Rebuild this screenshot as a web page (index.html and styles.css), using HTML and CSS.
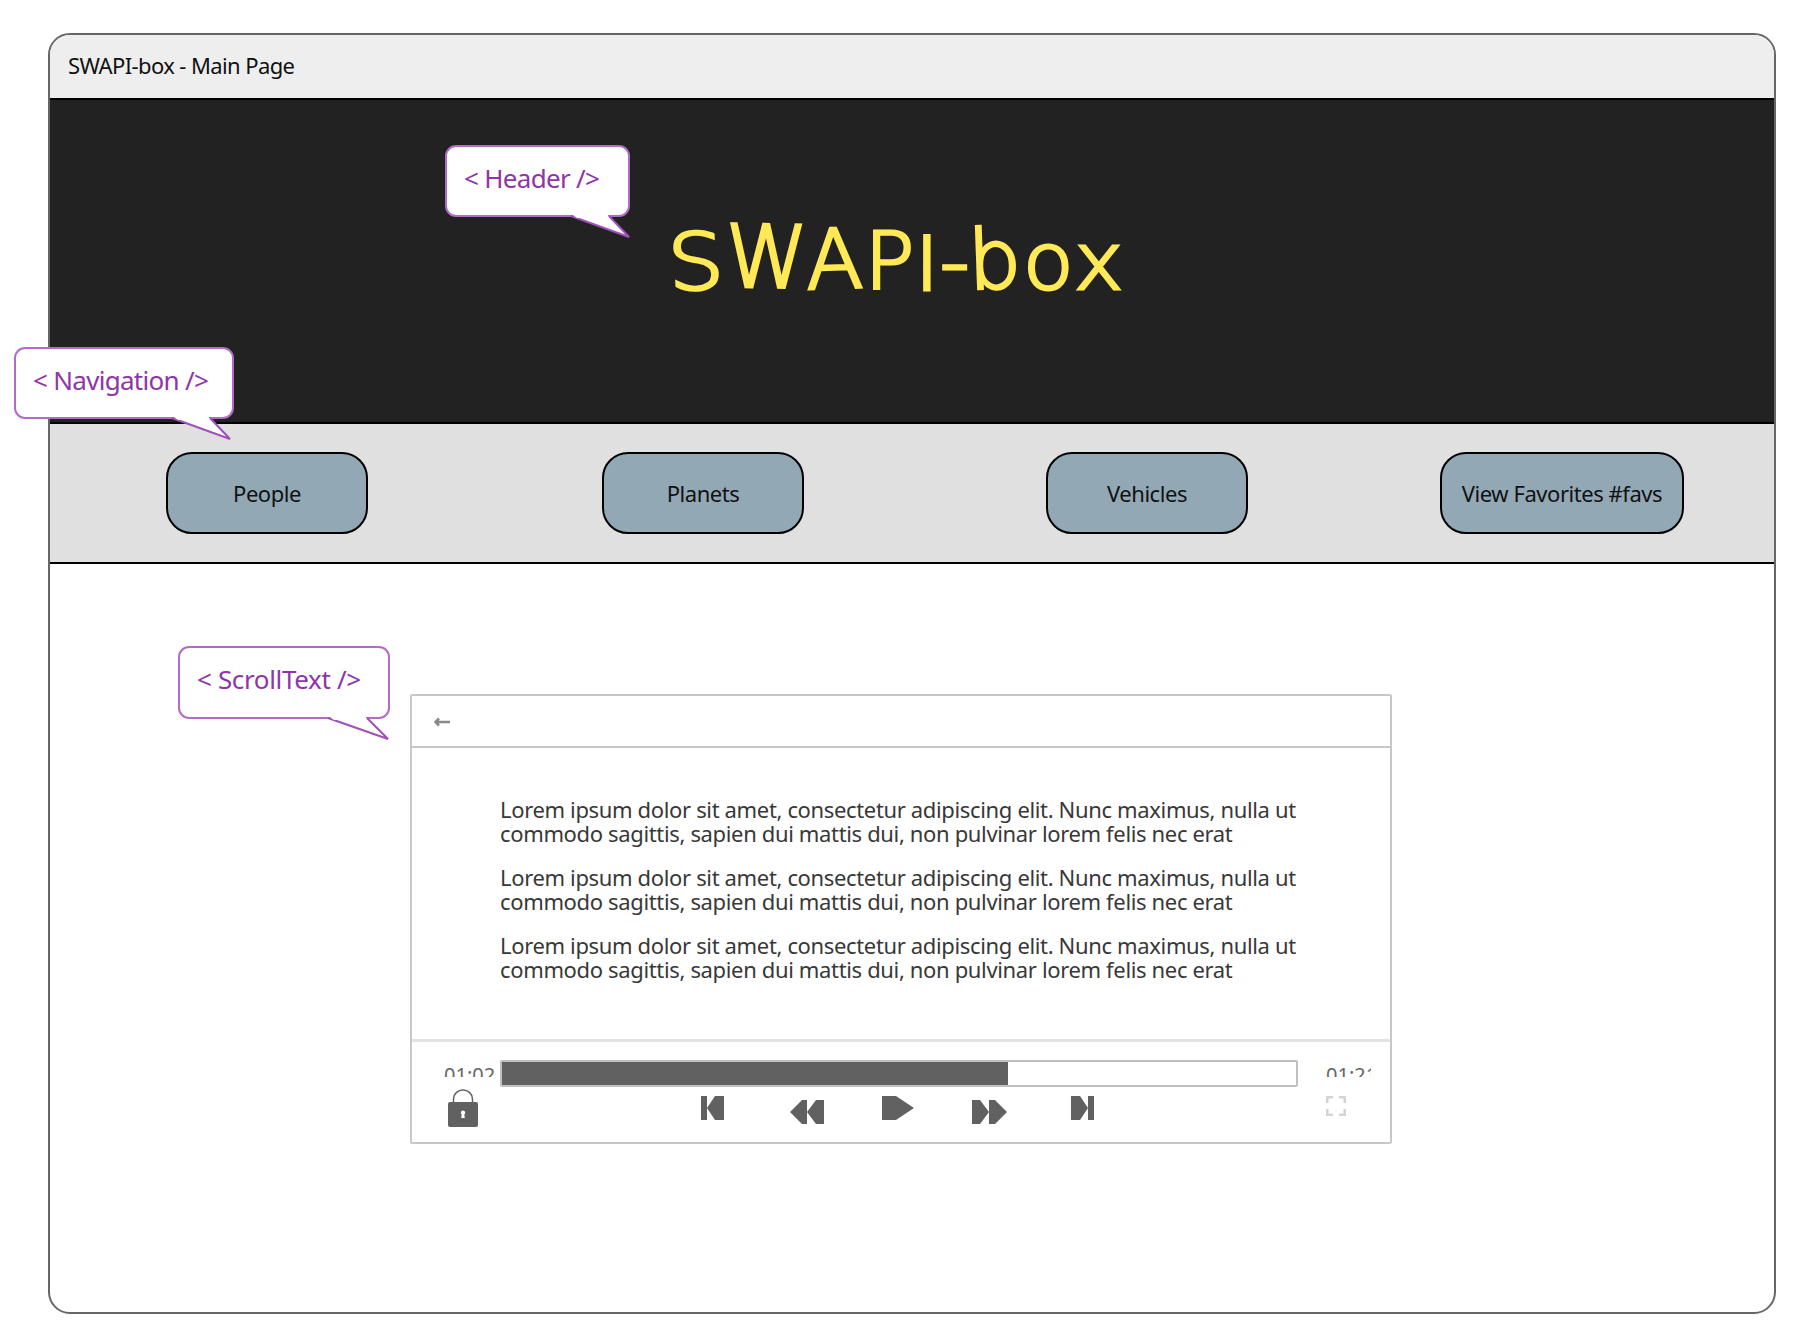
FILE: index.html
```html
<!DOCTYPE html>
<html lang="en">
<head>
  <meta charset="UTF-8">
  <title>SWAPI-box - Main Page</title>
  <link rel="stylesheet" href="styles.css">
</head>
<body>

  <div class="window">
    <div class="title-bar">SWAPI-box - Main Page</div>

    <header class="site-header">
      <h1 class="logo"><span class="l-s">S</span><span class="l-w">W</span><span class="l-a">A</span><span class="l-p">P</span><span class="l-i">I</span><span class="l-d">-</span><span class="l-b">b</span><span class="l-o">o</span><span class="l-x">x</span></h1>
    </header>

    <nav class="site-nav">
      <a class="nav-btn nav-people">People</a>
      <a class="nav-btn nav-planets">Planets</a>
      <a class="nav-btn nav-vehicles">Vehicles</a>
      <a class="nav-btn nav-favs">View Favorites #favs</a>
    </nav>

    <main class="content">
      <section class="player">
        <div class="player-bar">
          <svg class="back" width="16" height="10" viewBox="0 0 16 10"><path d="M5 1.500 1.500 5 5 8.500M1.500 5H16" fill="none" stroke="#888" stroke-width="2.500"/></svg>
        </div>

        <div class="crawl">
          <p>Lorem ipsum dolor sit amet, consectetur adipiscing elit. Nunc maximus, nulla ut commodo sagittis, sapien dui mattis dui, non pulvinar lorem felis nec erat</p>
          <p>Lorem ipsum dolor sit amet, consectetur adipiscing elit. Nunc maximus, nulla ut commodo sagittis, sapien dui mattis dui, non pulvinar lorem felis nec erat</p>
          <p>Lorem ipsum dolor sit amet, consectetur adipiscing elit. Nunc maximus, nulla ut commodo sagittis, sapien dui mattis dui, non pulvinar lorem felis nec erat</p>
        </div>

        <div class="controls">
          <div class="timeline">
            <span class="time time-start">01:02</span>
            <div class="progress"><div class="progress-fill" style="width: 63.7%"></div></div>
            <span class="time time-end">01:21</span>
          </div>

          <div class="buttons">
            <svg class="lock" width="32" height="39" viewBox="0 0 32 39">
              <path d="M6.500 14V10a9.500 9 0 0 1 19 0v4" fill="none" stroke="#616161" stroke-width="1.500"/>
              <rect x="1" y="13" width="30" height="25" rx="2" fill="#616161"/>
              <path d="M16 21.500a2.200 2.200 0 0 1 1.300 4l.5 3.500h-3.600l.5-3.500a2.200 2.200 0 0 1 1.300-4z" fill="#fff"/>
            </svg>
            <svg class="skip-back" width="23" height="24" viewBox="0 0 23 24"><path d="M0 0h6v12L14 0h9v24h-9L6 12v12H0z" fill="#616161"/></svg>
            <svg class="rewind" width="34" height="24" viewBox="0 0 34 24"><path d="M0 12 12 0h5v12L26 0h8v24h-8L17 12v12h-5z" fill="#616161"/></svg>
            <svg class="play" width="32" height="24" viewBox="0 0 32 24"><path d="M0 0h14l18 12-18 12H0z" fill="#616161"/></svg>
            <svg class="forward" width="35" height="24" viewBox="0 0 35 24"><path d="M0 0h8l9 12V0h6l12 12-12 12h-6V12L8 24H0z" fill="#616161"/></svg>
            <svg class="skip-next" width="23" height="24" viewBox="0 0 23 24"><path d="M0 0h9l8 12V0h6v24h-6V12L9 24H0z" fill="#616161"/></svg>
            <svg class="fullscreen" width="20" height="20" viewBox="0 0 20 20"><path d="M1.250 7V1.250H7M13 1.250h5.750V7M18.750 13v5.750H13M7 18.750H1.250V13" fill="none" stroke="#d4d4d4" stroke-width="2.500"/></svg>
          </div>
        </div>
      </section>
    </main>
  </div>

  <div class="callout callout-header">&lt; Header /&gt;
    <svg class="tail" width="60" height="24" viewBox="0 0 60 24"><path d="M0 0 58 21 38 0" fill="#fff" stroke="#a050b8" stroke-width="2"/><path d="M2 -1H37V2H6z" fill="#fff"/></svg>
  </div>
  <div class="callout callout-nav">&lt; Navigation /&gt;
    <svg class="tail" width="60" height="24" viewBox="0 0 60 24"><path d="M0 0 58 21 38 0" fill="#fff" stroke="#a050b8" stroke-width="2"/><path d="M2 -1H37V2H6z" fill="#fff"/></svg>
  </div>
  <div class="callout callout-scroll">&lt; ScrollText /&gt;
    <svg class="tail" width="62" height="24" viewBox="0 0 62 24"><path d="M0 0 60 21 39 0" fill="#fff" stroke="#a050b8" stroke-width="2"/><path d="M2 -1H38V2H6z" fill="#fff"/></svg>
  </div>

</body>
</html>
```

FILE: styles.css
```css
body {
  margin: 0;
  background: #fff;
  font-family: "Noto Sans", sans-serif;
  position: relative;
  height: 1336px;
  overflow: hidden;
}

.window {
  box-sizing: border-box;
  width: 1728px;
  height: 1281px;
  margin: 33px 0 0 48px;
  border: 2px solid #666;
  border-radius: 22px;
  overflow: hidden;
  display: flex;
  flex-direction: column;
}

.title-bar {
  height: 63px;
  flex: none;
  background: #eee;
  padding: 0 0 4px 18px;
  box-sizing: border-box;
  display: flex;
  align-items: center;
  font-size: 22px;
  letter-spacing: -0.6px;
  color: #111;
}

.site-header {
  height: 324px;
  flex: none;
  box-sizing: border-box;
  background: #222;
  border-top: 2px solid #000;
}

.logo {
  margin: 0;
  padding: 116px 0 0 622px;
  font-family: "DejaVu Sans", sans-serif;
  font-weight: 200;
  font-size: 78px;
  line-height: 92px;
  letter-spacing: 0.5px;
  color: #ffe957;
  -webkit-text-stroke: 3px #ffe957;
  white-space: nowrap;
  transform: scaleX(1.06);
  transform-origin: 622px 0;
}

.logo span {
  display: inline-block;
  transform-origin: 50% 100%;
}

.l-s { transform: rotate(-3deg) scaleX(1.06); }
.l-w { transform: scaleY(1.1) rotate(1deg); }
.l-a { transform: scaleY(1.05) rotate(-2deg); }
.l-i { transform: scaleY(0.95); }
.l-b { transform: scaleY(1.05) rotate(-2deg); }

.site-nav {
  height: 142px;
  flex: none;
  box-sizing: border-box;
  background: #e0e0e0;
  border-top: 2px solid #000;
  border-bottom: 2px solid #000;
  padding: 28px 0 0 116px;
  display: flex;
  align-items: flex-start;
}

.nav-btn {
  box-sizing: border-box;
  width: 202px;
  height: 82px;
  flex: none;
  background: #92a8b5;
  border: 2px solid #000;
  border-radius: 26px;
  display: flex;
  align-items: center;
  justify-content: center;
  font-size: 22px;
  letter-spacing: -0.45px;
  color: #111;
}

.nav-planets { margin-left: 234px; }
.nav-vehicles { margin-left: 242px; }
.nav-favs {
  width: 244px;
  margin-left: 192px;
}

.content {
  flex: 1;
  padding: 130px 0 0 360px;
}

.player {
  box-sizing: border-box;
  width: 982px;
  height: 450px;
  border: 2px solid #c8c8c8;
  border-radius: 2px;
  display: flex;
  flex-direction: column;
}

.player-bar {
  height: 50px;
  flex: none;
  border-bottom: 2px solid #c8c8c8;
  display: flex;
  align-items: center;
  padding-left: 22px;
}

.back {
  margin-top: 2px;
}

.crawl {
  height: 294px;
  flex: none;
  box-sizing: border-box;
  padding: 49px 58px 0 88px;
  border-bottom: 3px solid #e2e2e2;
  font-size: 22px;
  line-height: 24px;
  letter-spacing: -0.35px;
  color: #383838;
}

.crawl p {
  margin: 0 0 20px;
}

.controls {
  flex: 1;
  padding-top: 18px;
}

.timeline {
  display: flex;
  align-items: flex-start;
  height: 27px;
}

.time {
  box-sizing: border-box;
  height: 17px;
  overflow: hidden;
  font-size: 20px;
  line-height: 30px;
  color: #666;
  white-space: nowrap;
}

.time-start {
  width: 56px;
  margin-left: 32px;
}

.time-end {
  width: 45px;
  margin-left: 28px;
}

.progress {
  box-sizing: border-box;
  width: 798px;
  height: 27px;
  border: 2px solid #c0c0c0;
  border-radius: 2px;
  background: #fff;
}

.progress-fill {
  height: 100%;
  background: #616161;
}

.buttons {
  display: flex;
  align-items: flex-start;
  margin-top: 2px;
}

.lock { margin-left: 35px; }
.skip-back { margin: 7px 0 0 222px; }
.rewind { margin: 11px 0 0 66px; }
.play { margin: 7px 0 0 58px; }
.forward { margin: 11px 0 0 58px; }
.skip-next { margin: 7px 0 0 64px; }
.fullscreen { margin: 7px 0 0 232px; }

.callout {
  position: absolute;
  box-sizing: border-box;
  height: 72px;
  background: #fff;
  border: 2px solid #b06cc8;
  border-radius: 11px;
  padding-left: 17px;
  font-size: 26px;
  line-height: 62px;
  letter-spacing: -0.7px;
  color: #8e35a8;
  white-space: nowrap;
}

.tail {
  position: absolute;
  overflow: visible;
}

.callout-header {
  left: 445px;
  top: 145px;
  width: 185px;
}

.callout-header .tail {
  left: 124px;
  top: 69px;
}

.callout-nav {
  left: 14px;
  top: 347px;
  width: 220px;
}

.callout-nav .tail {
  left: 156px;
  top: 69px;
}

.callout-scroll {
  left: 178px;
  top: 646px;
  width: 212px;
  height: 73px;
  letter-spacing: -0.35px;
}

.callout-scroll .tail {
  left: 148px;
  top: 70px;
}
```
